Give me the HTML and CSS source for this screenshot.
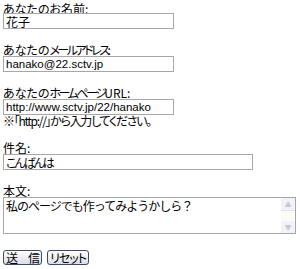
FILE: index.html
```html
<!DOCTYPE html>
<html lang="ja">
<head>
    <meta charset="UTF-8">
    <title>お問い合わせ</title>
    <link rel="stylesheet" href="styles.css">
</head>
<body>
    <form class="mail-form">
        <div class="field first">
            <label class="label" for="name">あなたのお名前:</label>
            <input class="text short" id="name" type="text" value="花子">
        </div>
        <div class="field">
            <label class="label" for="email">あなたの<span class="narrow">メールアドレス</span>:</label>
            <input class="text short latin" id="email" type="text" value="hanako@22.sctv.jp">
        </div>
        <div class="field">
            <label class="label" for="url">あなたの<span class="narrow">ホームページ</span>URL:</label>
            <input class="text short latin" id="url" type="text" value="http://www.sctv.jp/22/hanako">
            <p class="note">※「http://」から入力してください。</p>
        </div>
        <div class="field">
            <label class="label" for="subject">件名:</label>
            <input class="text wide" id="subject" type="text" value="こんばんは">
        </div>
        <div class="field">
            <label class="label" for="body">本文:</label>
            <div class="memo">
                <textarea class="memo-text" id="body">私のページでも作ってみようかしら？</textarea>
                <div class="scrollbar">
                    <span class="arrow up"></span>
                    <span class="track"></span>
                    <span class="arrow down"></span>
                </div>
            </div>
        </div>
        <div class="buttons">
            <button class="btn" type="submit">送　信</button>
            <button class="btn" type="reset">リセット</button>
        </div>
    </form>
</body>
</html>
```

FILE: styles.css
```css
body {
    margin: 0;
    padding: 3px 3px 0;
    background: #ffffff;
    color: #000;
    font-family: "Noto Sans CJK JP", sans-serif;
    font-size: 12px;
    font-feature-settings: "palt";
}
.mail-form {
    display: flex;
    flex-direction: column;
}
.field {
    display: flex;
    flex-direction: column;
    align-items: flex-start;
    margin-bottom: 15px;
}
.label {
    line-height: 12px;
    height: 12px;
}
/* the page starts 2px higher than the first label's glyph box */
.first .label {
    margin-bottom: -2px;
}
.first {
    margin-top: -0px;
}
.narrow {
    letter-spacing: -2.5px;
}
.text {
    box-sizing: border-box;
    height: 16px;
    margin: 0;
    padding: 0 2px;
    border: 1px solid #a7a6aa;
    font-family: "Noto Sans CJK JP", sans-serif;
    font-size: 12px;
    font-feature-settings: "palt";
    color: #000;
    outline: none;
}
.latin {
    font-family: "Liberation Sans", Arial, sans-serif;
    font-size: 11.5px;
}
.short {
    width: 171px;
}
.wide {
    width: 250px;
    letter-spacing: -2px;
}
.note {
    margin: 0;
    line-height: 12px;
    height: 12px;
    letter-spacing: -1.3px;
}
.memo {
    box-sizing: border-box;
    display: flex;
    width: 293px;
    height: 37px;
    border: 1px solid #a7a6aa;
}
.memo-text {
    flex: 1;
    margin: 0;
    padding: 1px 2px;
    border: none;
    resize: none;
    overflow: hidden;
    font-family: "Noto Sans CJK JP", sans-serif;
    font-size: 12px;
    line-height: 14px;
    letter-spacing: -1px;
    outline: none;
}
.scrollbar {
    width: 14px;
    display: flex;
    flex-direction: column;
    background: #fbfbf8;
}
.arrow {
    height: 12px;
    display: flex;
    align-items: center;
    justify-content: center;
    background: #f1f3f8;
    color: #c2c8d8;
    font-size: 7px;
}
.arrow.up::before {
    content: "▲";
}
.arrow.down::before {
    content: "▼";
}
.track {
    flex: 1;
    border-top: 1px solid #e2e4ea;
}
.buttons {
    display: flex;
    gap: 5px;
    margin-top: 1px;
}
.btn {
    box-sizing: border-box;
    height: 15px;
    padding: 0 2px;
    border: 1px solid #3c4a66;
    border-radius: 3px;
    background: linear-gradient(#ffffff, #dcdce4);
    font-family: "Noto Sans CJK JP", sans-serif;
    font-size: 12px;
    line-height: 12px;
    letter-spacing: -1px;
    color: #000;
    font-feature-settings: "palt";
}
```
